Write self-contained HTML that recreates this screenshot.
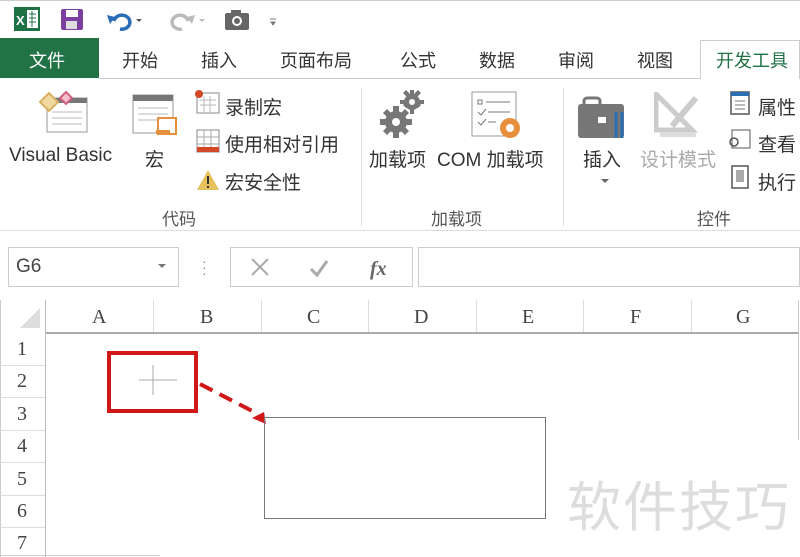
<!DOCTYPE html>
<html><head><meta charset="utf-8"><style>
*{margin:0;padding:0;box-sizing:border-box}
body{width:800px;height:557px;overflow:hidden;background:#fff;position:relative;font-family:"Liberation Sans","Noto Sans CJK SC",sans-serif;color:#444}
.a{position:absolute;white-space:nowrap}
.t{font-size:18px;color:#333}
.r{font-size:19px;color:#333}
.g{font-size:17px;color:#555}
.serif{font-family:"Liberation Serif","Noto Serif CJK SC",serif;font-size:20px;color:#444}
</style></head><body>
<div class="a" style="left:0;top:0;width:800px;height:1px;background:#ccc"></div>
<svg class="a" style="left:12px;top:5px" width="270" height="28">
<rect x="2" y="2" width="26" height="24" fill="#1e7145"/><rect x="15" y="5" width="11" height="18" fill="#fff"/><path d="M17 9h7M17 13h7M17 17h7M20 6v16" stroke="#1e7145" stroke-width="1"/><text x="4" y="20" font-size="13" fill="#fff" font-family="Liberation Sans" font-weight="bold">X</text>
<rect x="49" y="4" width="22" height="21" rx="2" fill="#7b3fa0"/><rect x="54" y="5" width="12" height="7" fill="#fff"/><rect x="54" y="16" width="11" height="8" fill="#ddd"/>
<path d="M102 16a8 7 0 1 1 6 8" fill="none" stroke="#2a6fb5" stroke-width="3.5"/><path d="M95 10l8 2-5 7z" fill="#2a6fb5"/><path d="M124 14l3 3 3-3z" fill="#555"/>
<path d="M176 16a8 7 0 1 0 -6 8" fill="none" stroke="#bbb" stroke-width="3.5"/><path d="M183 10l-8 2 5 7z" fill="#bbb"/><path d="M187 14l3 3 3-3z" fill="#bbb"/>
<rect x="213" y="8" width="24" height="17" rx="2" fill="#666"/><rect x="219" y="5" width="10" height="4" fill="#666"/><circle cx="225" cy="16" r="5" fill="#fff"/><circle cx="225" cy="16" r="3" fill="#666"/>
<path d="M258 14h6M259 17l2 3 2-3z" stroke="#777" fill="#777"/>
</svg>
<div class="a" style="left:0;top:38px;width:99px;height:40px;background:#217346"></div>
<div class="a t" style="left:29px;top:47px;color:#fff">文件</div>
<div class="a t" style="left:122px;top:47px">开始</div>
<div class="a t" style="left:201px;top:47px">插入</div>
<div class="a t" style="left:280px;top:47px">页面布局</div>
<div class="a t" style="left:400px;top:47px">公式</div>
<div class="a t" style="left:479px;top:47px">数据</div>
<div class="a t" style="left:558px;top:47px">审阅</div>
<div class="a t" style="left:637px;top:47px">视图</div>
<div class="a" style="left:99px;top:78px;width:601px;height:1px;background:#ccc"></div>
<div class="a" style="left:700px;top:40px;width:100px;height:39px;border:1px solid #ccc;border-bottom:none;background:#fff"></div>
<div class="a t" style="left:716px;top:47px;color:#217346">开发工具</div>
<div class="a" style="left:0;top:230px;width:800px;height:1px;background:#ddd"></div>
<div class="a" style="left:361px;top:88px;width:1px;height:138px;background:#ddd"></div>
<div class="a" style="left:563px;top:88px;width:1px;height:138px;background:#ddd"></div>
<svg class="a" style="left:38px;top:90px" width="52" height="46"><rect x="9" y="8" width="40" height="34" fill="#fff" stroke="#999"/><rect x="9" y="8" width="40" height="5" fill="#777"/><path d="M14 22h30M14 28h30M14 34h30" stroke="#bbb"/><path d="M2 12l9-9 9 9-9 9z" fill="#f0d8a0" stroke="#d8b060" stroke-width="2"/><path d="M22 8l6-6 6 6-6 6z" fill="#f5c0cc" stroke="#d06080" stroke-width="2"/></svg>
<div class="a r" style="left:9px;top:145px">Visual Basic</div>
<svg class="a" style="left:130px;top:92px" width="52" height="48"><rect x="3" y="3" width="40" height="38" fill="#fff" stroke="#999"/><rect x="3" y="3" width="40" height="6" fill="#777"/><path d="M8 16h30M8 22h30M8 28h30" stroke="#bbb"/><path d="M28 26h18v16h-18z" fill="#fff" stroke="#e6903c" stroke-width="2"/><rect x="26" y="38" width="14" height="4" fill="#e6903c"/></svg>
<div class="a r" style="left:145px;top:145px">宏</div>
<svg class="a" style="left:194px;top:90px" width="28" height="110"><rect x="3" y="3" width="22" height="20" fill="#fff" stroke="#888"/><path d="M6 10h16M6 15h16M10 6v16M16 6v16" stroke="#bbb"/><circle cx="5" cy="4" r="4" fill="#d24726"/><rect x="3" y="40" width="22" height="22" fill="#fff" stroke="#888"/><path d="M3 47h22M3 54h22M10 40v22M17 40v22" stroke="#aaa"/><rect x="3" y="57" width="22" height="5" fill="#d24726"/><path d="M3 100l11-20 11 20z" fill="#e8c060"/><rect x="13" y="86" width="2" height="8" fill="#333"/><rect x="13" y="96" width="2" height="2" fill="#333"/></svg>
<div class="a r" style="left:225px;top:93px">录制宏</div>
<div class="a r" style="left:225px;top:130px">使用相对引用</div>
<div class="a r" style="left:225px;top:168px">宏安全性</div>
<div class="a g" style="left:162px;top:205px">代码</div>
<svg class="a" style="left:378px;top:88px" width="48" height="52"><g fill="#777"><circle cx="34" cy="14" r="8"/><path d="M32 2h4v24h-4zM22 12h24v4h-24z"/><path d="M25 5l3-3 15 15-3 3zM40 2l3 3-15 15-3-3z"/><circle cx="18" cy="34" r="11"/><path d="M15 18h6v32h-6zM2 31h32v6h-32z"/><path d="M5 25l4-4 22 22-4 4zM27 21l4 4-22 22-4-4z"/></g><circle cx="34" cy="14" r="3" fill="#fff"/><circle cx="18" cy="34" r="4" fill="#fff"/></svg>
<div class="a r" style="left:369px;top:145px">加载项</div>
<svg class="a" style="left:470px;top:90px" width="56" height="52"><rect x="2" y="2" width="44" height="44" fill="#fff" stroke="#999"/><path d="M8 10h4v4h-4zM16 12h24M8 22l3 3 5-6M18 22h22M8 32l3 3 5-6M18 32h8" stroke="#777" fill="none"/><circle cx="40" cy="38" r="10" fill="#e6903c"/><circle cx="40" cy="38" r="4" fill="#fff"/></svg>
<div class="a r" style="left:437px;top:145px">COM 加载项</div>
<div class="a g" style="left:431px;top:205px">加载项</div>
<svg class="a" style="left:578px;top:92px" width="52" height="52"><rect x="6" y="6" width="16" height="8" rx="3" fill="none" stroke="#777" stroke-width="3"/><rect x="0" y="12" width="46" height="34" rx="3" fill="#777"/><rect x="20" y="25" width="8" height="6" fill="#fff"/><path d="M38 20v26M44 20v26" stroke="#2a6fb5" stroke-width="3"/></svg>
<div class="a r" style="left:583px;top:145px">插入</div>
<div class="a" style="left:601px;top:179px;border:4px solid transparent;border-top-color:#666"></div>
<svg class="a" style="left:654px;top:92px" width="50" height="48"><path d="M2 2v36h36z" fill="none" stroke="#ccc" stroke-width="5"/><path d="M18 34l24-28" stroke="#ccc" stroke-width="6"/><rect x="6" y="40" width="36" height="5" fill="#ddd"/></svg>
<div class="a r" style="left:640px;top:145px;color:#aaa">设计模式</div>
<svg class="a" style="left:728px;top:90px" width="24" height="100"><rect x="3" y="2" width="18" height="22" fill="#fff" stroke="#555" stroke-width="1.5"/><rect x="3" y="2" width="18" height="4" fill="#2a6fb5"/><path d="M7 11h10M7 15h10M7 19h10" stroke="#777"/><rect x="4" y="40" width="18" height="18" fill="#fff" stroke="#555"/><circle cx="6" cy="52" r="4" fill="none" stroke="#555" stroke-width="1.5"/><rect x="4" y="76" width="16" height="22" fill="#fff" stroke="#555" stroke-width="1.5"/><rect x="8" y="80" width="8" height="12" fill="#aaa"/></svg>
<div class="a r" style="left:758px;top:93px">属性</div>
<div class="a r" style="left:758px;top:130px">查看</div>
<div class="a r" style="left:758px;top:168px">执行</div>
<div class="a g" style="left:697px;top:205px">控件</div>
<div class="a" style="left:8px;top:247px;width:171px;height:40px;border:1px solid #ccc"></div>
<div class="a" style="left:16px;top:256px;font-size:19px;color:#444">G6</div>
<div class="a" style="left:158px;top:264px;border:4px solid transparent;border-top-color:#777"></div>
<div class="a" style="left:202px;top:258px;color:#888;font-size:14px;line-height:6px">·<br>·<br>·</div>
<div class="a" style="left:230px;top:247px;width:183px;height:40px;border:1px solid #ccc"></div>
<svg class="a" style="left:248px;top:255px" width="160" height="26"><path d="M4 4l16 16M20 4l-16 16" stroke="#aaa" stroke-width="2"/><path d="M63 14l6 6 10-14" stroke="#aaa" stroke-width="3" fill="none"/><text x="122" y="20" font-family="Liberation Serif" font-style="italic" font-weight="bold" font-size="20" fill="#666">fx</text></svg>
<div class="a" style="left:418px;top:247px;width:382px;height:40px;border:1px solid #ccc"></div>
<svg class="a" style="left:20px;top:306px" width="22" height="22"><path d="M20 2v20h-20z" fill="#ddd"/></svg>
<div class="a" style="left:46px;top:332px;width:753px;height:2px;background:#aaa"></div>
<div class="a" style="left:45px;top:300px;width:1px;height:257px;background:#bbb"></div>
<div class="a" style="left:798px;top:300px;width:1px;height:140px;background:#ccc"></div>
<div class="a" style="left:0;top:300px;width:1px;height:257px;background:#ccc"></div>
<div class="a serif" style="left:92px;top:306px">A</div>
<div class="a serif" style="left:200px;top:306px">B</div>
<div class="a serif" style="left:307px;top:306px">C</div>
<div class="a serif" style="left:414px;top:306px">D</div>
<div class="a serif" style="left:522px;top:306px">E</div>
<div class="a serif" style="left:630px;top:306px">F</div>
<div class="a serif" style="left:736px;top:306px">G</div>
<div class="a" style="left:153px;top:300px;width:1px;height:32px;background:#ddd"></div>
<div class="a" style="left:261px;top:300px;width:1px;height:32px;background:#ddd"></div>
<div class="a" style="left:368px;top:300px;width:1px;height:32px;background:#ddd"></div>
<div class="a" style="left:476px;top:300px;width:1px;height:32px;background:#ddd"></div>
<div class="a" style="left:583px;top:300px;width:1px;height:32px;background:#ddd"></div>
<div class="a" style="left:691px;top:300px;width:1px;height:32px;background:#ddd"></div>
<div class="a serif" style="left:17px;top:338px">1</div>
<div class="a serif" style="left:17px;top:370px">2</div>
<div class="a serif" style="left:17px;top:403px">3</div>
<div class="a serif" style="left:17px;top:435px">4</div>
<div class="a serif" style="left:17px;top:468px">5</div>
<div class="a serif" style="left:17px;top:500px">6</div>
<div class="a serif" style="left:17px;top:532px">7</div>
<div class="a" style="left:0;top:365px;width:45px;height:1px;background:#ddd"></div>
<div class="a" style="left:0;top:397px;width:45px;height:1px;background:#ddd"></div>
<div class="a" style="left:0;top:430px;width:45px;height:1px;background:#ddd"></div>
<div class="a" style="left:0;top:462px;width:45px;height:1px;background:#ddd"></div>
<div class="a" style="left:0;top:495px;width:45px;height:1px;background:#ddd"></div>
<div class="a" style="left:0;top:527px;width:45px;height:1px;background:#ddd"></div>
<div class="a" style="left:107px;top:351px;width:91px;height:62px;border:4px solid #d01818"></div>
<svg class="a" style="left:130px;top:360px" width="300" height="80"><path d="M9 20h38M23 5v30" stroke="#aaa" stroke-width="1"/><path d="M70 24l58 30" stroke="#d01818" stroke-width="4" stroke-dasharray="14 8"/><path d="M122 58l12-6 2 12z" fill="#d01818"/></svg>
<div class="a" style="left:264px;top:417px;width:282px;height:102px;border:1.5px solid #777"></div>
<div class="a" style="left:567px;top:463px;font-size:54px;color:#ddd;font-family:'Noto Sans CJK SC',sans-serif;letter-spacing:2px">软件技巧</div>
<div class="a" style="left:0;top:555px;width:160px;height:1px;background:#ccc"></div>
</body></html>
